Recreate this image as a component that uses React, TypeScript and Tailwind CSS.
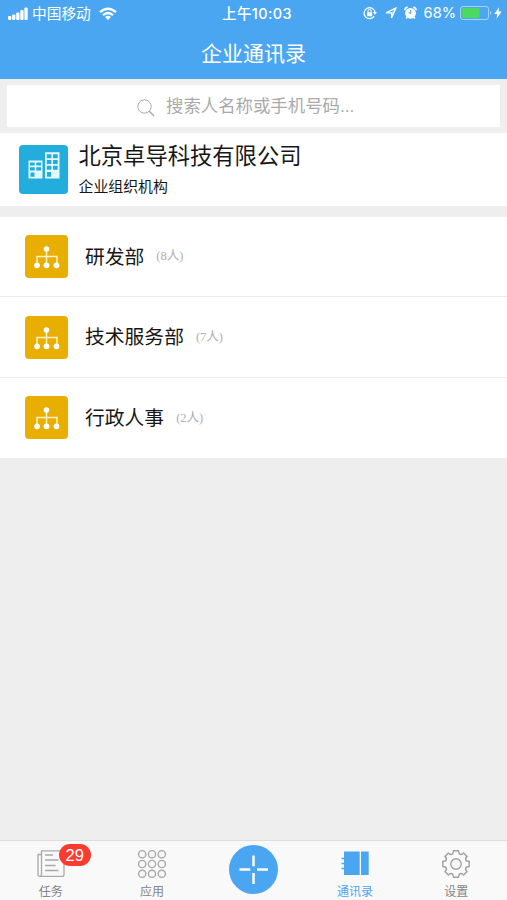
import type { ReactNode } from "react";

const SANS = "font-['Liberation_Sans','Noto_Sans_CJK_SC',sans-serif]";

function SignalIcon() {
  return (
    <svg width="20" height="13" viewBox="0 0 20 13" fill="#fff" className="shrink-0">
      <rect x="0" y="9" width="3.3" height="4" rx="1" />
      <rect x="4.1" y="7.5" width="3.3" height="5.5" rx="1" />
      <rect x="8.2" y="5.5" width="3.3" height="7.5" rx="1" />
      <rect x="12.3" y="3" width="3.3" height="10" rx="1" />
      <rect x="16.4" y="0.5" width="3.3" height="12.5" rx="1" />
    </svg>
  );
}

function WifiIcon() {
  return (
    <svg width="18" height="14" viewBox="0 0 18 14" fill="none" stroke="#fff" strokeWidth="2.3" className="shrink-0">
      <path d="M1 5.2Q9-1.8 17 5.2" />
      <path d="M3.9 8.2Q9 3.8 14.1 8.2" />
      <path d="M9 13 6 10Q9 7.6 12 10Z" fill="#fff" stroke="none" />
    </svg>
  );
}

function RotationLockIcon() {
  return (
    <svg width="14" height="14" viewBox="0 0 14 14" fill="none" stroke="#fff" strokeWidth="1.2" className="shrink-0">
      <path d="M11.2 10.2A5.5 5.5 0 1 1 12 6.2" />
      <path d="M9.8 6h4.2l-2.1 2.8z" fill="#fff" stroke="none" />
      <rect x="4" y="6.2" width="5.2" height="4" rx=".5" fill="#fff" stroke="none" />
      <path d="M5 6.5V5a1.6 1.6 0 0 1 3.2 0v1.5" strokeWidth="1" />
    </svg>
  );
}

function AlarmIcon() {
  return (
    <svg width="13" height="14" viewBox="0 0 13 14" className="shrink-0">
      <circle cx="6.5" cy="7.3" r="5.4" fill="#fff" />
      <path d="M.9 4.3Q.8 1.5 3.8 1.2M12.1 4.3Q12.2 1.5 9.2 1.2M3.1 11.1 2.2 12.5M9.9 11.1l.9 1.4" fill="none" stroke="#fff" strokeWidth="1.6" />
      <path d="M6.7 4v3.6L4.5 6.3" fill="none" stroke="#4ba6f2" strokeWidth="1" />
    </svg>
  );
}

function BuildingsIcon() {
  return (
    <svg width="49" height="49" viewBox="0 0 49 49" fill="#e4f8ff">
      <path fillRule="evenodd" d="M9.5 15.5H23.500V33.500H9.500ZM11 17.500V20.500H15.700V17.500ZM17.300 17.500V20.500H22V17.500ZM11 22.300V25.500H15.700V22.300ZM17.300 22.300V25.500H22V22.300ZM11.500 27.500V31.700H15.500V27.500Z" />
      <path fillRule="evenodd" d="M26 7.300H40.500V33.500H26ZM27.800 9.300V13.300H32.400V9.300ZM34 9.300V13.300H38.700V9.300ZM27.800 15V19H32.400V15ZM34 15V19H38.700V15ZM27.800 20.700V24.700H32.400V20.700ZM34 20.700V24.700H38.700V20.700ZM28 27V31.700H32V27Z" />
    </svg>
  );
}

function OrgIcon() {
  return (
    <svg width="43" height="43" viewBox="0 0 43 43" fill="#fff">
      <path d="M21.500 14V30M12 30V21.500H32V30" fill="none" stroke="#fff3cc" strokeWidth="1.400" />
      <circle cx="21.500" cy="14" r="2.800" />
      <circle cx="12" cy="30.300" r="2.900" />
      <circle cx="21.500" cy="30.300" r="2.900" />
      <circle cx="31.500" cy="30.300" r="2.900" />
    </svg>
  );
}

function TaskIcon() {
  return (
    <svg width="28" height="28" viewBox="0 0 28 28" fill="none" stroke="#a9a9a9" strokeWidth="1.300">
      <path d="M4.500 3.500V24.500Q4.500 26.400 2.800 26.400Q1 26.400 1 24.500V4.500H4.500" />
      <path d="M4.500 4V.8H27V24.500Q27 26.400 25 26.400H2.800M8 5H16M8 10H21.500M8 15.500H18.500M8 20.500H21.500" />
    </svg>
  );
}

function AppsIcon() {
  return (
    <svg width="28" height="28" viewBox="0 0 28 28" fill="none" stroke="#a9a9a9" strokeWidth="1.400">
      {[4.2, 14, 23.800].map((cy) =>
        [4.2, 14, 23.800].map((cx) => <circle key={`${cx}-${cy}`} cx={cx} cy={cy} r="3.600" />),
      )}
    </svg>
  );
}

function ContactsIcon() {
  return (
    <svg width="28" height="28" viewBox="0 0 28 28" fill="#4ba6f2">
      <path d="M3 1.500H18.700V25H3ZM20 1.500H27.700V25H20Z" />
      <path d="M.5 8.500H4M.5 13.500H4M.5 18.500H4" stroke="#4ba6f2" strokeWidth="1.500" />
    </svg>
  );
}

function GearIcon() {
  return (
    <svg width="28" height="28" viewBox="0 0 28 28" fill="none" stroke="#a0a0a0" strokeWidth="1.400" strokeLinejoin="round">
      <circle cx="14" cy="14" r="5.200" />
      <path d="M11.500.8H16.500L17.300 3.900Q19.900 5.300 21.600 2.900L25.100 6.400Q22.700 8.100 24.100 10.700L27.200 11.500V16.500L24.100 17.300Q22.700 19.900 25.100 21.600L21.600 25.100Q19.900 22.700 17.300 24.100L16.500 27.200H11.500L10.700 24.100Q8.100 22.700 6.400 25.100L2.900 21.600Q5.300 19.900 3.900 17.300L.8 16.500V11.500L3.900 10.700Q5.300 8.100 2.900 6.400L6.400 2.900Q8.100 5.300 10.700 3.900Z" />
    </svg>
  );
}

function Tab({ label, active = false, children }: { label: string; active?: boolean; children: ReactNode }) {
  return (
    <div className={`flex flex-1 flex-col items-center pt-[9px] text-[12px] leading-[16px] ${active ? "text-[#4ba6f2]" : "text-[#858585]"}`}>
      <div className="relative h-7 w-7">{children}</div>
      <span className="mt-[6px] whitespace-nowrap">{label}</span>
    </div>
  );
}

const departments = [
  { name: "研发部", count: 8 },
  { name: "技术服务部", count: 7 },
  { name: "行政人事", count: 2 },
];

export default function App() {
  return (
    <div className={`flex h-[900px] w-[507px] flex-col overflow-hidden bg-[#eeeeee] text-[#171717] ${SANS}`}>
      <header className="h-[79px] shrink-0 bg-[#4ba6f2] text-white">
        <div className="grid h-[27px] grid-cols-[1fr_auto_1fr] items-center pr-[5px] pl-2 text-[15px]">
          <div className="flex items-center">
            <SignalIcon />
            <span className="ml-1 pt-[2px] text-[14.700px] leading-[25px]">中国移动</span>
            <span className="ml-2"><WifiIcon /></span>
          </div>
          <span className="pl-[4px] font-['Inter','Noto_Sans_CJK_SC',sans-serif] text-[14.500px] font-medium tracking-[0.400px]">上午10:03</span>
          <div className="flex items-center justify-end">
            <RotationLockIcon />
            <svg width="12" height="12" viewBox="0 0 12 12" className="ml-2 shrink-0" fill="none" stroke="#fff" strokeWidth="1.300">
              <path d="M1 5.800 11 1 6.500 11V5.800Z" />
              <path d="M6.500 5.800 11 1 6.500 11Z" fill="#fff" fillOpacity=".5" stroke="none" />
            </svg>
            <span className="ml-[7px]"><AlarmIcon /></span>
            <span className="ml-[7px] pt-px font-['Inter',sans-serif] text-[14.600px]">68%</span>
            <svg width="33" height="14" viewBox="0 0 33 14" className="ml-1 shrink-0">
              <rect x=".5" y=".5" width="28" height="13" rx="2.500" fill="none" stroke="#a6d3fa" />
              <rect x="2" y="2" width="17.500" height="10" rx="1" fill="#4bd964" />
              <path d="M30 5Q32.500 7 30 9Z" fill="#a6d3fa" />
            </svg>
            <svg width="8" height="12" viewBox="0 0 8 12" className="ml-px shrink-0" fill="#fff">
              <path d="M5 .2.3 7H3.300L2.500 11.800 7.700 4.600H4.600Z" />
            </svg>
          </div>
        </div>
        <h1 className="text-center text-[21px] leading-[53px] font-normal">企业通讯录</h1>
      </header>

      <div className="mx-[7px] mt-[6px] flex h-[42px] shrink-0 items-center bg-white pl-[130px]">
        <svg width="18" height="18" viewBox="0 0 18 18" fill="none" stroke="#aaa" strokeWidth="1" className="mt-1">
          <circle cx="7.500" cy="7.500" r="6.700" />
          <path d="M12.300 12.300 17 17" strokeWidth="1.500" />
        </svg>
        <span className="ml-[11px] pt-px text-[17.400px] text-[#aaaaaa]">搜索人名称或手机号码...</span>
      </div>

      <section className="mt-[6px] flex h-[73px] shrink-0 items-center bg-white pl-[19px]">
        <div className="h-[49px] w-[49px] rounded-[4px] bg-[#22addd]"><BuildingsIcon /></div>
        <div className="ml-[10.500px] flex flex-col">
          <span className="text-[22.300px] leading-[34px]">北京卓导科技有限公司</span>
          <span className="text-[14.900px] leading-[26px]">企业组织机构</span>
        </div>
      </section>

      <ul className="mt-[11px] shrink-0 bg-white">
        {departments.map(({ name, count }) => (
          <li key={name} className="flex h-[80.400px] items-center border-b border-[#ececec] pl-[25px] last:border-b-0">
            <div className="h-[43px] w-[43px] rounded-[4px] bg-[#e9af00]"><OrgIcon /></div>
            <span className="ml-[17px] text-[19.800px] leading-[30px]">{name}</span>
            <span className="ml-3 font-['Liberation_Serif','Noto_Sans_CJK_SC',serif] text-[12.500px] text-[#b0b0b0]">({count}人)</span>
          </li>
        ))}
      </ul>

      <nav className="mt-auto flex h-[60px] shrink-0 border-t border-[#dedede] bg-[#f9f9f9]">
        <Tab label="任务">
          <TaskIcon />
          <span className="absolute -top-[6px] left-[22px] flex h-[22px] w-8 items-center justify-center rounded-full bg-[#fc3b30] text-[16.500px] text-white">29</span>
        </Tab>
        <Tab label="应用"><AppsIcon /></Tab>
        <div className="flex flex-1 justify-center pt-[4px]">
          <div className="h-[49px] w-[49px] rounded-full bg-[#4ba6f2]">
            <svg width="49" height="49" viewBox="0 0 49 49" fill="none" stroke="#fff" strokeWidth="2.500">
              <path d="M24.500 10.500V21.300M24.500 28V39M10.500 24.500H21.300M28 24.500H39" />
            </svg>
          </div>
        </div>
        <Tab label="通讯录" active><ContactsIcon /></Tab>
        <Tab label="设置"><GearIcon /></Tab>
      </nav>
    </div>
  );
}
